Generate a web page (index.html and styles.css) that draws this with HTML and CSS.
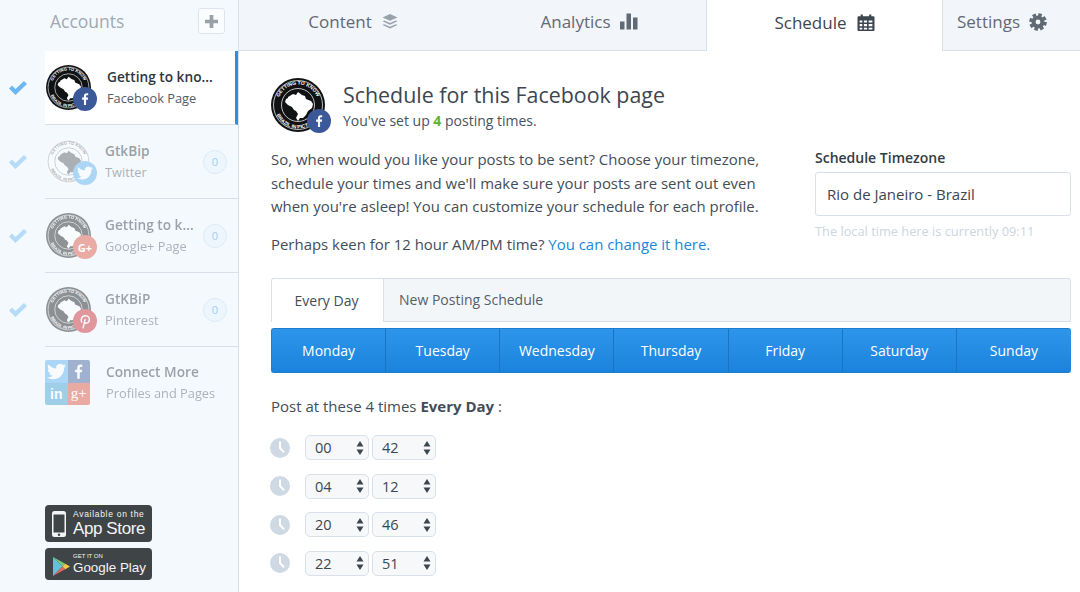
FILE: index.html
```html
<!DOCTYPE html>
<html lang="en">
<head>
<meta charset="utf-8">
<title>Schedule</title>
<link rel="stylesheet" href="styles.css">
</head>
<body>
<svg class="sprite" xmlns="http://www.w3.org/2000/svg">
  <symbol id="avatar" viewBox="0 0 54 54">
    <circle class="av-outer" cx="27" cy="27" r="27"/>
    <circle class="av-line" cx="27" cy="27" r="24.500"/>
    <circle class="av-line" cx="27" cy="27" r="16.500"/>
    <path class="av-map" d="M17 19l5-3 3 1 2-3 4 3 3 1 1 3 5 2 2 3-1 4-4 3-2 4-3 3-3 0-2 3-2-3 2-4-2-3-2-1-2-3-4-2-3-3 1-3 2-1z"/>
    <defs>
      <path id="arc-top" d="M6.500 27a20.500 20.500 0 0 1 41 0"/>
      <path id="arc-bot" d="M3.500 27a23.500 23.500 0 0 0 47 0"/>
    </defs>
    <text class="av-text"><textPath href="#arc-top" startOffset="8">GETTING TO KNOW</textPath></text>
    <text class="av-text"><textPath href="#arc-bot" startOffset="10">BRAZIL IN PICTURES</textPath></text>
  </symbol>
  <symbol id="i-fb" viewBox="0 0 24 24"><path d="M13.600 21v-8h2.700l.4-3.200h-3.100V7.800c0-.9.3-1.500 1.600-1.500h1.600V3.400c-.3 0-1.300-.1-2.400-.1-2.400 0-4 1.500-4 4.100v2.400H7.700V13h2.700v8z"/></symbol>
  <symbol id="i-tw" viewBox="0 0 24 24"><path d="M23.953 4.570a10 10 0 0 1-2.825.775 4.958 4.958 0 0 0 2.163-2.723c-.951.555-2.005.959-3.127 1.184a4.920 4.920 0 0 0-8.384 4.482C7.690 8.095 4.067 6.130 1.640 3.162a4.822 4.822 0 0 0-.666 2.475c0 1.710.870 3.213 2.188 4.096a4.904 4.904 0 0 1-2.228-.616v.060a4.923 4.923 0 0 0 3.946 4.827 4.996 4.996 0 0 1-2.212.085 4.936 4.936 0 0 0 4.604 3.417 9.867 9.867 0 0 1-6.102 2.105c-.390 0-.779-.023-1.170-.067a13.995 13.995 0 0 0 7.557 2.209c9.053 0 13.998-7.496 13.998-13.985 0-.210 0-.420-.015-.630A9.935 9.935 0 0 0 24 4.590z"/></symbol>
  <symbol id="i-check" viewBox="0 0 20 16"><path d="M1 8.500l3-3 3.500 3.500L16 1l3 3L7.500 15z"/></symbol>
  <symbol id="i-clock" viewBox="0 0 20 20"><circle cx="10" cy="10" r="10" fill="#cfd9e3"/><path d="M9 3.500h2v6l3.800 4.300-1.500 1.300L9 10.500z" fill="#fff"/></symbol>
  <symbol id="i-arrows" viewBox="0 0 8 14"><path d="M4 0l3.500 5.500h-7zM4 14L.5 8.500h7z"/></symbol>
</svg>

<div class="app">
  <aside class="sidebar">
    <div class="side-head">
      <span class="side-title">Accounts</span>
      <span class="add-btn"><svg viewBox="0 0 14 14" width="13" height="13"><path d="M5 0h4v5h5v4H9v5H5V9H0V5h5z"/></svg></span>
    </div>

    <div class="acct-row">
      <div class="check-col"><svg class="check strong"><use href="#i-check"/></svg></div>
      <div class="acct active">
        <div class="av-wrap">
          <svg class="av dark"><use href="#avatar"/></svg>
          <span class="net fb"><svg><use href="#i-fb"/></svg></span>
        </div>
        <div class="acct-text"><b>Getting to kno...</b><span>Facebook Page</span></div>
      </div>
    </div>

    <div class="acct-row">
      <div class="check-col"><svg class="check"><use href="#i-check"/></svg></div>
      <div class="acct">
        <div class="av-wrap faded">
          <svg class="av light"><use href="#avatar"/></svg>
          <span class="net tw"><svg><use href="#i-tw"/></svg></span>
        </div>
        <div class="acct-text faded"><b>GtkBip</b><span>Twitter</span></div>
        <span class="count">0</span>
      </div>
    </div>

    <div class="acct-row">
      <div class="check-col"><svg class="check"><use href="#i-check"/></svg></div>
      <div class="acct">
        <div class="av-wrap faded">
          <svg class="av dark"><use href="#avatar"/></svg>
          <span class="net gp">G+</span>
        </div>
        <div class="acct-text faded"><b>Getting to k...</b><span>Google+ Page</span></div>
        <span class="count">0</span>
      </div>
    </div>

    <div class="acct-row">
      <div class="check-col"><svg class="check"><use href="#i-check"/></svg></div>
      <div class="acct">
        <div class="av-wrap faded">
          <svg class="av dark"><use href="#avatar"/></svg>
          <span class="net pi"><svg viewBox="0 0 24 24"><path d="M9.500 21l2.600-11M7.600 13.500C5.500 9.500 8 5 12.500 5c4 0 6 3 5.200 6.300-.7 3-3.900 4.700-6.200 2.700" fill="none" stroke="#fff" stroke-width="1.900" stroke-linecap="round"/></svg></span>
        </div>
        <div class="acct-text faded"><b>GtKBiP</b><span>Pinterest</span></div>
        <span class="count">0</span>
      </div>
    </div>

    <div class="acct-row">
      <div class="check-col"></div>
      <div class="acct last">
        <div class="tile faded">
          <span class="t-tw"><svg><use href="#i-tw"/></svg></span>
          <span class="t-fb"><svg><use href="#i-fb"/></svg></span>
          <span class="t-in">in</span>
          <span class="t-gp">g+</span>
        </div>
        <div class="acct-text faded"><b>Connect More</b><span>Profiles and Pages</span></div>
      </div>
    </div>

    <div class="stores">
      <div class="store apple">
        <svg class="phone" viewBox="0 0 14 26"><rect x="0" y="0" width="14" height="26" rx="2.500" fill="#f3f4f5"/><rect x="1.500" y="3.500" width="11" height="18" fill="#3f4447"/><circle cx="7" cy="23.700" r="1.200" fill="#3f4447"/></svg>
        <div class="store-text"><small>Available on the</small><strong>App Store</strong></div>
      </div>
      <div class="store google">
        <svg class="play" viewBox="0 0 18 20"><path d="M0 0l10 10L0 20z" fill="#5fc4d8"/><path d="M0 0l13 7-3 3z" fill="#7ac77d"/><path d="M0 20l13-7-3-3z" fill="#e2655f"/><path d="M13 7l5 3-5 3-3-3z" fill="#f4c84f"/></svg>
        <div class="store-text"><small class="caps">GET IT ON</small><strong>Google Play</strong></div>
      </div>
    </div>
  </aside>

  <div class="content">
    <nav class="tabs">
      <div class="tab t1">Content
        <svg class="ti muted" viewBox="0 0 16 16"><path d="M8 1l7 3.200-7 3.200L1 4.200z"/><path d="M2.600 7L8 9.500 13.400 7 15 7.800 8 11 1 7.800z"/><path d="M2.600 10.500L8 13l5.400-2.500 1.600.8L8 14.500 1 11.300z"/></svg>
      </div>
      <div class="tab t2">Analytics
        <svg class="ti" viewBox="0 0 18 16"><rect x="0" y="8" width="4.500" height="8"/><rect x="6.500" y="0" width="4.500" height="16"/><rect x="13" y="4" width="4.500" height="12"/></svg>
      </div>
      <div class="tab t3 current">Schedule
        <svg class="ti" viewBox="0 0 16 16"><path fill-rule="evenodd" d="M1 2h2V.5h2V2h6V.5h2V2h2a1 1 0 0 1 1 1v12a1 1 0 0 1-1 1H1a1 1 0 0 1-1-1V3a1 1 0 0 1 1-1zM2 6v2h2.500V6zm4 0v2h3V6h-3zm4.500 0v2H14V6zM2 9.500v2h2.500v-2zm4 0v2h3v-2zm4.500 0v2H14v-2zM2 13v1.500h2.500V13zm4 0v1.500h3V13zm4.500 0v1.500H14V13z"/></svg>
      </div>
      <div class="tab t4">Settings
        <svg class="ti gear" viewBox="0 0 20 20"><circle cx="10" cy="10" r="5" fill="none" stroke="currentColor" stroke-width="4.600"/><circle cx="10" cy="10" r="8.300" fill="none" stroke="currentColor" stroke-width="3" stroke-dasharray="4 2.520"/></svg>
      </div>
    </nav>

    <main class="panel">
      <header class="page-head">
        <div class="av-wrap big">
          <svg class="av dark"><use href="#avatar"/></svg>
          <span class="net fb"><svg><use href="#i-fb"/></svg></span>
        </div>
        <div>
          <h1>Schedule for this Facebook page</h1>
          <p class="sub">You've set up <b>4</b> posting times.</p>
        </div>
      </header>

      <section class="intro">
        <div class="intro-text">
          <p>So, when would you like your posts to be sent? Choose your timezone, schedule your times and we'll make sure your posts are sent out even when you're asleep! You can customize your schedule for each profile.</p>
          <p class="keen">Perhaps keen for 12 hour AM/PM time? <a>You can change it here.</a></p>
        </div>
        <div class="tz">
          <label>Schedule Timezone</label>
          <div class="tz-input">Rio de Janeiro - Brazil</div>
          <small>The local time here is currently 09:11</small>
        </div>
      </section>

      <div class="sched-tabs">
        <div class="st on">Every Day</div>
        <div class="st rest">New Posting Schedule</div>
      </div>

      <div class="days">
        <span>Monday</span><span>Tuesday</span><span>Wednesday</span><span>Thursday</span><span>Friday</span><span>Saturday</span><span>Sunday</span>
      </div>

      <p class="post-at">Post at these 4 times <b>Every Day</b> :</p>

      <div class="times">
        <div class="time"><svg class="clock"><use href="#i-clock"/></svg><span class="sel">00<svg><use href="#i-arrows"/></svg></span><span class="sel">42<svg><use href="#i-arrows"/></svg></span></div>
        <div class="time"><svg class="clock"><use href="#i-clock"/></svg><span class="sel">04<svg><use href="#i-arrows"/></svg></span><span class="sel">12<svg><use href="#i-arrows"/></svg></span></div>
        <div class="time"><svg class="clock"><use href="#i-clock"/></svg><span class="sel">20<svg><use href="#i-arrows"/></svg></span><span class="sel">46<svg><use href="#i-arrows"/></svg></span></div>
        <div class="time"><svg class="clock"><use href="#i-clock"/></svg><span class="sel">22<svg><use href="#i-arrows"/></svg></span><span class="sel">51<svg><use href="#i-arrows"/></svg></span></div>
      </div>
    </main>
  </div>
</div>
</body>
</html>
```
FILE: styles.css
```css
* { box-sizing: border-box; }
html, body { margin: 0; height: 100%; overflow: hidden; }
body { font-family: "Open Sans", "Liberation Sans", sans-serif; color: #3d4650; background: #fff; }
p, h1 { margin: 0; }
.sprite { display: none; }

.app { display: flex; width: 1080px; height: 592px; }

/* Sidebar */
.sidebar { width: 239px; flex: none; display: flex; flex-direction: column; background: #f4f9fe; border-right: 1px solid #d9e0e8; }
.side-head { height: 51px; flex: none; display: flex; align-items: center; justify-content: space-between; padding: 0 13px 9px 50px; }
.side-title { font-size: 17.500px; color: #a1a9b3; }
.add-btn { width: 27px; height: 26px; display: flex; align-items: center; justify-content: center; background: #fafcfe; border: 1px solid #dfe5ec; border-radius: 3px; fill: #99a0a8; }

.acct-row { display: flex; height: 74px; flex: none; }
.check-col { width: 45px; flex: none; display: flex; align-items: center; padding-left: 8px; }
.check { width: 20px; height: 16px; fill: #b5dbf8; margin-bottom: 1px; }
.check.strong { fill: #6db8f2; }

.acct { flex: 1; display: flex; align-items: center; border-bottom: 1px solid #d7dfe8; padding-left: 1px; position: relative; min-width: 0; }
.acct.last { border-bottom: 0; padding: 0 0 3px; }
.acct.active { background: #fff; border-right: 3px solid #2b8fe0; }

.av-wrap { position: relative; width: 45px; height: 45px; flex: none; }
.av { display: block; width: 100%; height: 100%; }
.av.dark { --o: #101214; --l: #e8e8e8; --m: #fff; --t: #fff; }
.av.light { --o: #fff; --l: #6b6f73; --m: #55595d; --t: #55595d; }
.av-outer { fill: var(--o); }
.av-line { fill: none; stroke: var(--l); stroke-width: .8px; }
.av-map { fill: var(--m); }
.av-text { fill: var(--t); font-family: "Liberation Sans", sans-serif; font-size: 5px; font-weight: 700; }

.net { position: absolute; right: -6px; bottom: -1px; width: 24px; height: 24px; border-radius: 50%; display: flex; align-items: center; justify-content: center; color: #fff; fill: #fff; font-size: 11px; font-weight: 700; }
.net svg { width: 16px; height: 16px; }
.net.fb { background: #3b5998; }
.net.tw { background: #55acee; }
.net.gp { background: #dd4b39; }
.net.pi { background: #cb2027; }
.net.pi svg { width: 18px; height: 18px; }

.faded { opacity: .45; }

.acct-text { flex: 1; min-width: 0; padding: 0 0 1px 14px; display: flex; flex-direction: column; gap: 3px; white-space: nowrap; line-height: 19px; }
.acct.active .acct-text { padding-left: 16px; }
.acct.last .acct-text { padding-left: 16px; }
.acct-text b { font-size: 13.700px; font-weight: 600; color: #2e3640; }
.acct-text span { font-size: 12.800px; color: #525c66; }

.count { width: 24px; height: 24px; flex: none; margin-right: 11px; border-radius: 50%; border: 1px solid #dcebf8; background: #edf6fd; color: #a6cdec; font-size: 11px; display: flex; align-items: center; justify-content: center; }

.tile { width: 45px; height: 45px; flex: none; display: grid; grid-template-columns: 1fr 1fr; grid-template-rows: 1fr 1fr; border-radius: 2px; overflow: hidden; color: #fff; fill: #fff; font-family: "Liberation Sans", sans-serif; font-weight: 700; font-size: 14px; }
.tile span { display: flex; align-items: center; justify-content: center; }
.tile svg { width: 19px; height: 19px; }
.t-tw { background: #55acee; }
.t-fb { background: #3b5998; }
.t-in { background: #3a9bd0; }
.t-gp { background: #dd4b39; font-family: "Liberation Serif", serif; font-weight: 400; font-size: 15px; }

.stores { margin-top: auto; padding: 0 0 12px 45px; display: flex; flex-direction: column; gap: 6px; }
.store { width: 107px; background: #3f4447; border-radius: 4px; color: #f4f5f6; display: flex; align-items: center; }
.store.apple { height: 37px; padding-left: 7px; gap: 7px; }
.store.google { height: 32px; padding-left: 8px; gap: 3px; }
.phone { width: 14px; height: 26px; flex: none; }
.play { width: 17px; height: 19px; flex: none; margin-top: 4px; }
.store-text { display: flex; flex-direction: column; white-space: nowrap; }
.store-text small { font-size: 8.500px; line-height: 9px; letter-spacing: .7px; font-family: "Liberation Sans", sans-serif; }
.store-text small.caps { font-size: 6px; line-height: 7px; letter-spacing: 0; }
.store-text strong { font-weight: 400; font-size: 17px; line-height: 19px; letter-spacing: -.4px; font-family: "Liberation Sans", sans-serif; }
.store.google .store-text strong { font-size: 13.400px; line-height: 16px; letter-spacing: 0; }

/* Tabs */
.content { flex: 1; min-width: 0; display: flex; flex-direction: column; }
.tabs { display: flex; height: 51px; flex: none; background: #f2f5f9; }
.tab { display: flex; align-items: center; justify-content: center; gap: 9px; padding-bottom: 7px; font-size: 17px; color: #616a74; border-bottom: 1px solid #d9e0e8; white-space: nowrap; }
.t1 { width: 233px; padding-right: 4px; }
.t2 { width: 234px; }
.t3 { width: 237px; gap: 10px; color: #3d4650; background: #fff; border: 0 solid #d9e0e8; border-width: 0 1px; }
.t4 { flex: 1; justify-content: flex-start; padding-left: 14px; }
.ti { width: 18px; height: 17px; fill: currentColor; flex: none; }
.ti.muted { fill: #98a1ab; }
.ti.gear { width: 18px; height: 18px; }

/* Panel */
.panel { flex: 1; min-height: 0; padding: 27px 9px 0 32px; }
.page-head { display: flex; align-items: center; gap: 18px; }
.av-wrap.big { width: 54px; height: 54px; }
h1 { font-size: 21.400px; font-weight: 400; line-height: 30px; color: #3d4650; }
.sub { font-size: 14px; line-height: 20px; color: #4a535d; margin-top: 1px; }
.sub b { color: #5cb531; font-weight: 700; }

.intro { display: flex; justify-content: space-between; margin-top: 16px; }
.intro-text { width: 500px; font-size: 14.950px; line-height: 23.500px; color: #444d57; }
.keen { margin-top: 14px; }
.keen a { color: #1b87d9; }
.tz { width: 256px; padding-top: 1px; }
.tz label { display: block; font-size: 14px; font-weight: 600; line-height: 18px; color: #333b44; }
.tz-input { height: 44px; margin-top: 5px; padding-left: 11px; display: flex; align-items: center; border: 1px solid #d9e0e8; border-radius: 3px; font-size: 15px; color: #3d4650; }
.tz small { display: block; margin-top: 6px; font-size: 12.800px; line-height: 18px; color: #ccd6e0; }

.sched-tabs { display: flex; height: 44px; margin-top: 22px; }
.st { display: flex; align-items: center; padding-bottom: 1px; font-size: 14px; color: #565f69; border: 1px solid #d9e0e8; border-bottom: 0; }
.st.on { width: 113px; justify-content: center; padding-right: 2px; background: #fff; border-right: 1px solid #d9e0e8; border-radius: 3px 0 0 0; color: #444d57; }
.st.rest { flex: 1; padding-left: 15px; background: #f3f6f9; border-left: 0; border-bottom: 1px solid #d9e0e8; border-radius: 0 3px 0 0; }

.days { display: grid; grid-template-columns: repeat(7, 1fr); height: 45px; margin-top: 6px; border-radius: 3px; border: 1px solid #1c7dcf; border-right: 0; background: linear-gradient(#2d95ea, #1b83dc); overflow: hidden; }
.days span { display: flex; align-items: center; justify-content: center; color: #fff; font-size: 14px; border-right: 1px solid #1a74c2; }
.days span:last-child { border-right: 0; }

.post-at { margin-top: 23px; font-size: 15px; line-height: 20px; color: #444d57; }
.post-at b { font-weight: 700; }

.times { margin-top: 19px; display: flex; flex-direction: column; gap: 13.500px; }
.time { display: flex; align-items: center; gap: 3px; height: 25px; }
.clock { width: 20px; height: 20px; margin: 0 12px 0 -1px; flex: none; }
.sel { width: 64px; height: 25px; padding: 0 4px 0 9px; display: flex; align-items: center; justify-content: space-between; background: #f6f8fa; border: 1px solid #d9e0e8; border-radius: 5px; font-size: 14.500px; color: #3d4650; }
.sel svg { width: 8px; height: 14px; fill: #3d4650; }
```
